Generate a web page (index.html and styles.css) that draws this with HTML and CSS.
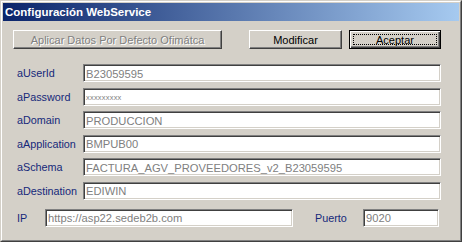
FILE: index.html
```html
<!DOCTYPE html>
<html>
<head>
<meta charset="utf-8">
<link rel="stylesheet" href="styles.css">
</head>
<body>
<div class="window">
  <div class="frame">
    <div class="titlebar"><span class="title">Configuración WebService</span></div>
    <div class="content">
      <div class="toolbar">
        <div class="btn btn-wide disabled">Aplicar Datos Por Defecto Ofimátca</div>
        <div class="btn btn-mod">Modificar</div>
        <div class="btn btn-default"><span class="focus">Aceptar</span></div>
      </div>
      <div class="fields">
        <div class="row"><span class="label">aUserId</span><div class="field">B23059595</div></div>
        <div class="row"><span class="label">aPassword</span><div class="field pwd">xxxxxxxxx</div></div>
        <div class="row"><span class="label">aDomain</span><div class="field">PRODUCCION</div></div>
        <div class="row"><span class="label">aApplication</span><div class="field">BMPUB00</div></div>
        <div class="row"><span class="label">aSchema</span><div class="field">FACTURA_AGV_PROVEEDORES_v2_B23059595</div></div>
        <div class="row"><span class="label">aDestination</span><div class="field">EDIWIN</div></div>
      </div>
      <div class="row-ip">
        <span class="label label-ip">IP</span>
        <div class="field field-ip">https://asp22.sedeb2b.com</div>
        <span class="label label-port">Puerto</span>
        <div class="field field-port">9020</div>
      </div>
    </div>
  </div>
</div>
</body>
</html>
```
FILE: styles.css
```css
html, body {
  margin: 0;
  padding: 0;
  background: #d4d0c8;
}
body {
  font-family: "Liberation Sans", Arial, sans-serif;
  font-size: 11px;
}
.window {
  width: 462px;
  height: 242px;
  box-sizing: border-box;
  border-top: 1px solid #d4d0c8;
  border-left: 1px solid #d4d0c8;
  border-right: 1px solid #404040;
  border-bottom: 1px solid #404040;
  background: #d4d0c8;
}
.frame {
  height: 100%;
  box-sizing: border-box;
  border-top: 1px solid #ffffff;
  border-left: 1px solid #ffffff;
  border-right: 1px solid #808080;
  border-bottom: 1px solid #808080;
  padding: 1px;
  display: flex;
  flex-direction: column;
}
.titlebar {
  height: 18px;
  background: linear-gradient(to right, #0a246a, #a6caf0);
  display: flex;
  align-items: center;
  padding-left: 2px;
}
.title {
  color: #ffffff;
  font-weight: bold;
  font-size: 11.5px;
}
.content {
  flex: 1;
  display: flex;
  flex-direction: column;
}
.toolbar {
  display: flex;
  margin-top: 9px;
  padding-left: 10px;
}
.btn {
  height: 19px;
  box-sizing: border-box;
  display: flex;
  align-items: center;
  justify-content: center;
  color: #000000;
  border-top: 1px solid #ffffff;
  border-left: 1px solid #ffffff;
  border-right: 1px solid #404040;
  border-bottom: 1px solid #404040;
  box-shadow: inset -1px -1px 0 #808080;
  font-size: 11px;
}
.btn-wide {
  width: 209px;
}
.disabled {
  color: #808080;
  text-shadow: 1px 1px 0 #ffffff;
}
.btn-mod {
  width: 93px;
  margin-left: 27px;
}
.btn-default {
  width: 92px;
  margin-left: 7px;
  border: 1px solid #000000;
  box-shadow: inset 1px 1px 0 #ffffff, inset -1px -1px 0 #404040, inset -2px -2px 0 #808080;
  padding: 3px;
}
.focus {
  flex: 1;
  align-self: stretch;
  display: flex;
  align-items: center;
  justify-content: center;
  border: 1px dotted #000000;
}
.fields {
  display: flex;
  flex-direction: column;
  gap: 5.6px;
  margin-top: 15px;
}
.row {
  display: flex;
  align-items: center;
  height: 18px;
}
.label {
  color: #14287a;
  font-size: 10.8px;
}
.row .label {
  width: 66px;
  padding-left: 14px;
  box-sizing: content-box;
  flex: none;
}
.field {
  height: 18px;
  box-sizing: border-box;
  background: #ffffff;
  color: #808080;
  border-top: 1px solid #808080;
  border-left: 1px solid #808080;
  border-right: 1px solid #ffffff;
  border-bottom: 1px solid #ffffff;
  box-shadow: inset 1px 1px 0 #404040, inset -1px -1px 0 #d4d0c8;
  padding: 1px 2px 0 2px;
  display: flex;
  align-items: center;
  font-size: 11.2px;
  white-space: nowrap;
  overflow: hidden;
}
.row .field {
  width: 358px;
}
.pwd {
  font-size: 7.5px;
  letter-spacing: 0.2px;
}
.row-ip {
  display: flex;
  align-items: center;
  height: 18px;
  margin-top: 9px;
}
.label-ip {
  margin-left: 14px;
  width: 28px;
}
.field-ip {
  width: 248px;
}
.label-port {
  margin-left: 22px;
  width: 48px;
}
.field-port {
  width: 76px;
}
```
